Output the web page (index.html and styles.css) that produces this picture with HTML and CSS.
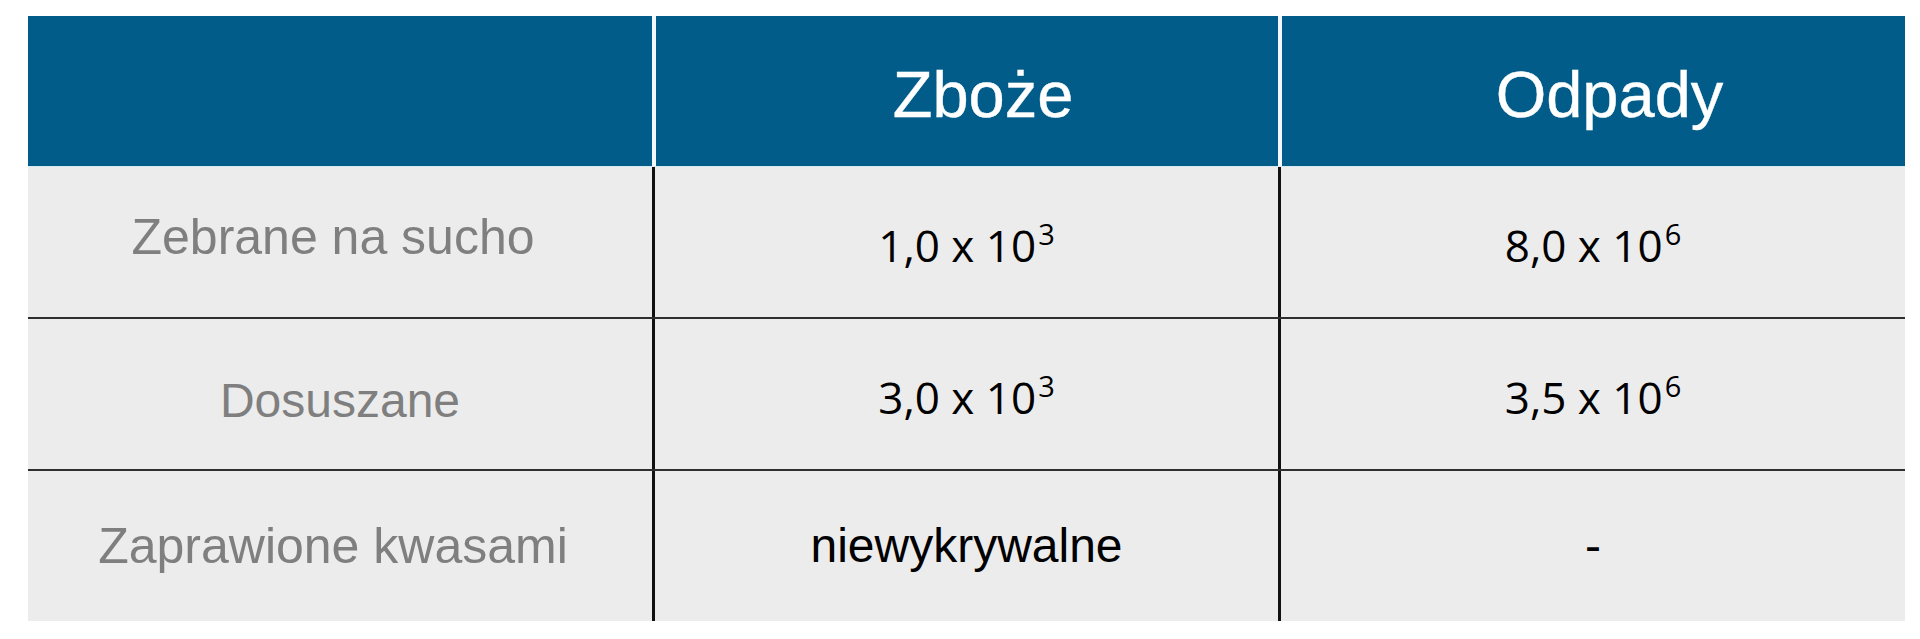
FILE: index.html
```html
<!DOCTYPE html>
<html lang="pl">
<head>
<meta charset="utf-8">
<title>Zboże i odpady</title>
<link rel="stylesheet" href="styles.css">
</head>
<body>
<div class="table">
  <div class="row row--head">
    <div class="cell cell--head"></div>
    <div class="cell cell--head">Zboże</div>
    <div class="cell cell--head">Odpady</div>
  </div>
  <div class="row row--body row--r1">
    <div class="cell label label--trail label--up">Zebrane na sucho</div>
    <div class="cell value"><span class="num">1,0 x 10<sup class="exp">3</sup></span></div>
    <div class="cell value"><span class="num">8,0 x 10<sup class="exp">6</sup></span></div>
  </div>
  <div class="row row--body row--r2">
    <div class="cell label label--small label--down">Dosuszane</div>
    <div class="cell value"><span class="num">3,0 x 10<sup class="exp">3</sup></span></div>
    <div class="cell value"><span class="num">3,5 x 10<sup class="exp">6</sup></span></div>
  </div>
  <div class="row row--body row--r3">
    <div class="cell label label--trail">Zaprawione kwasami</div>
    <div class="cell value value--word">niewykrywalne</div>
    <div class="cell value value--word">-</div>
  </div>
</div>
</body>
</html>
```

FILE: styles.css
```css
html, body {
  margin: 0;
  padding: 0;
  background: #ffffff;
}

.table {
  margin: 16px 0 0 28px;
  width: 1877px;
}

.row {
  display: grid;
  grid-template-columns: 624px 626px 627px;
  box-sizing: border-box;
}

.row--head {
  height: 151px;
  background: #015c8a;
  border-bottom: 1px solid #d6e8f1;
}

.row--body {
  background: #ececec;
}

.row--r1 { height: 150px; }
.row--r2 { height: 152px; border-top: 2px solid #2e2e2e; }
.row--r3 { height: 152px; border-top: 2px solid #2e2e2e; }

.cell {
  display: flex;
  align-items: center;
  justify-content: center;
  box-sizing: border-box;
  line-height: 1;
  white-space: nowrap;
}

.cell--head {
  font-family: "Liberation Sans", Arial, sans-serif;
  font-size: 65px;
  color: #ffffff;
  padding: 6px 0 0 32px;
  -webkit-text-stroke: 0.4px #ffffff;
}

.cell--head + .cell--head {
  border-left: 4px solid #f2f8fb;
}

.row--body .cell + .cell {
  border-left: 3px solid #111111;
}

.label {
  font-family: "Liberation Sans", Arial, sans-serif;
  font-size: 50px;
  color: #7f7f7f;
}

.label--small { font-size: 48px; }
.label--trail { padding-right: 14px; }
.label--up { padding-bottom: 10px; }
.label--down { padding-top: 14px; }

.value {
  font-family: "Open Sans", "Noto Sans", sans-serif;
  font-size: 44px;
  color: #000000;
  padding-top: 6px;
}

.num {
  display: block;
  line-height: 1;
}

.value--word {
  font-family: "Liberation Sans", Arial, sans-serif;
  font-size: 48px;
  padding-top: 0;
}

.exp {
  font-size: 29px;
  line-height: 0;
  vertical-align: 17px;
  margin-left: 2px;
}
```
